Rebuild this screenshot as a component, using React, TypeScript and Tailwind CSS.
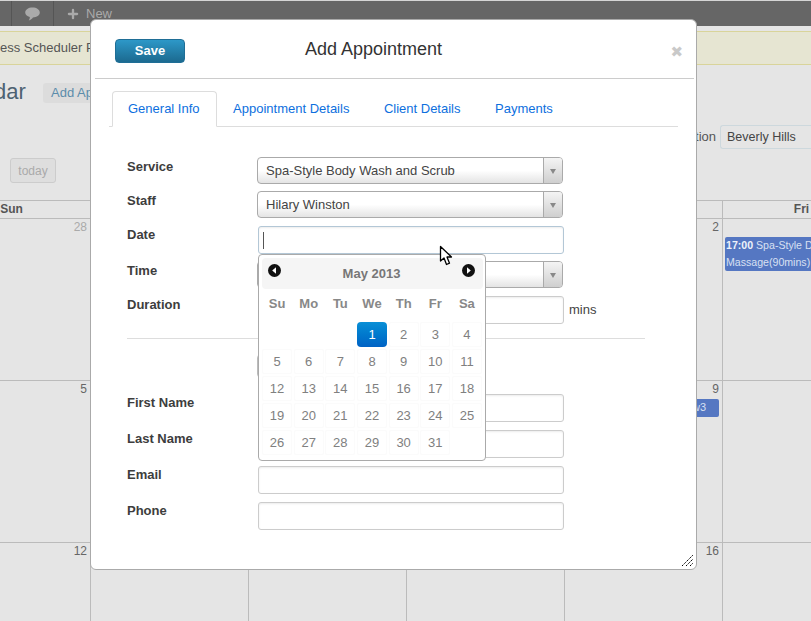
import { Plus } from 'lucide-react'

const weeks = [
  [28, 29, 30, 1, 2, 3, 4],
  [5, 6, 7, 8, 9, 10, 11],
  [12, 13, 14, 15, 16, 17, 18],
]

const pickerDays: (number | null)[] = [
  null, null, null, 1, 2, 3, 4,
  5, 6, 7, 8, 9, 10, 11,
  12, 13, 14, 15, 16, 17, 18,
  19, 20, 21, 22, 23, 24, 25,
  26, 27, 28, 29, 30, 31, null,
]

const Select = ({ value }: { value: string }) => (
  <div className="flex h-[27px] w-[306px] overflow-hidden rounded-[4px] border border-[#aaa] bg-gradient-to-b from-white via-white to-[#e4e4e4]">
    <div className="flex-1 pl-2 text-[13px] leading-[25px] text-[#444]">{value}</div>
    <div className="flex w-[19px] items-center justify-center border-l border-[#aaa] bg-gradient-to-b from-[#f4f4f4] to-[#cfcfcf]">
      <div className="mt-[1px] border-x-[3.5px] border-t-[5px] border-x-transparent border-t-[#888]" />
    </div>
  </div>
)

const Input = ({ focused, caret }: { focused?: boolean; caret?: boolean }) => (
  <div className={`ml-px flex h-[28px] w-[306px] items-center rounded-[3px] border bg-white pl-[4px] shadow-[inset_0_1px_2px_rgba(0,0,0,0.08)] ${focused ? 'border-[#b3c7d6]' : 'border-[#ccc]'}`}>
    {caret && <div className="h-[17px] w-px bg-[#555]" />}
  </div>
)

const Row = ({ label, children, className }: { label: string; children: React.ReactNode; className?: string }) => (
  <div className={`flex ${className ?? ''}`}>
    <div className="w-[130px] text-[13px] font-bold leading-[18px] text-[#3d3d3d]">{label}</div>
    {children}
  </div>
)

const Arrow = ({ dir }: { dir: 'left' | 'right' }) => (
  <svg width="13" height="13" viewBox="0 0 13 13">
    <circle cx="6.5" cy="6.5" r="6.5" fill="#111" />
    {dir === 'left' ? <path d="M8 3.2 L4.2 6.5 L8 9.8 Z" fill="#fff" /> : <path d="M5 3.2 L8.8 6.5 L5 9.8 Z" fill="#fff" />}
  </svg>
)

const DatePicker = () => (
  <div className="absolute left-[167px] top-[234px] h-[207px] w-[228px] rounded-[4px] border border-[#aaa] bg-white pl-[3px] pr-[2px] pt-[3px]">
    <div className="flex h-[31px] items-start justify-between rounded-[4px] bg-[#f5f5f5] pl-[6px] pr-[8px] pt-[6px]">
      <Arrow dir="left" />
      <span className="pt-px text-[13px] font-bold leading-[18px] text-[#777]">May 2013</span>
      <Arrow dir="right" />
    </div>
    <div className="mt-[1px] grid grid-cols-7 gap-x-[1.5px] pr-px">
      {['Su', 'Mo', 'Tu', 'We', 'Th', 'Fr', 'Sa'].map((d) => (
        <div key={d} className="h-[27px] text-center text-[13px] font-bold leading-[27px] text-[#888]">{d}</div>
      ))}
    </div>
    <div className="mt-[5px] grid grid-cols-7 gap-x-[1.5px] gap-y-[2px] pr-px">
      {pickerDays.map((d, i) =>
        d === 1 ? (
          <div key={i} className="h-[25px] rounded-[4px] bg-gradient-to-b from-[#0a8fd6] to-[#0062c4] text-center text-[13px] leading-[25px] text-white">1</div>
        ) : d ? (
          <div key={i} className="h-[25px] rounded-[2px] border border-[#fbfbfb] text-center text-[13px] leading-[23px] text-[#808080]">{d}</div>
        ) : (
          <div key={i} className="h-[25px]" />
        ),
      )}
    </div>
  </div>
)

const Modal = () => (
  <div className="absolute left-[90px] top-[19px] h-[551px] w-[607px] rounded-[6px] border border-[#aaa] bg-white pl-[4px] pr-[2px]">
    <div className="relative flex h-[59px] items-start border-b border-[#ccc]">
      <button className="ml-[20px] mt-[19px] h-[24px] w-[70px] rounded-[4px] border border-[#1f6e96] bg-gradient-to-b from-[#2d98c8] to-[#1c6a90] text-[13px] font-bold text-white">Save</button>
      <h3 className="ml-[120px] mt-[17px] text-[18px] leading-[24px] text-[#333]">Add Appointment</h3>
      <span className="absolute right-[11px] top-[24px] font-['DejaVu_Sans',sans-serif] text-[15px] leading-[16px] text-[#c9c9c9]">✖</span>
    </div>
    <div className="ml-[14px] mr-[16px] mt-[12px] flex h-[36px] items-stretch border-b border-[#ddd] pl-[3px] text-[13px] text-[#0d6fde]">
      <div className="-mb-px rounded-t-[4px] border border-b-white border-[#ddd] bg-white pl-[15px] pr-[16px] leading-[33px]">General Info</div>
      <div className="pl-[16.5px] pr-[17px] leading-[35px]">Appointment Details</div>
      <div className="pl-[17.5px] pr-[17px] leading-[35px]">Client Details</div>
      <div className="pl-[17.5px] leading-[35px]">Payments</div>
    </div>
    <div className="pl-[32px] pt-[30px]">
      <Row label="Service" className="[&>div:first-child]:pt-px"><Select value="Spa-Style Body Wash and Scrub" /></Row>
      <Row label="Staff" className="mt-[7px] [&>div:first-child]:pt-px"><Select value="Hilary Winston" /></Row>
      <Row label="Date" className="mt-[8px]"><Input focused caret /></Row>
      <Row label="Time" className="mt-[7px] [&>div:first-child]:pt-px"><Select value="" /></Row>
      <Row label="Duration" className="mt-[8px]">
        <Input />
        <span className="ml-[5px] text-[13px] leading-[28px] text-[#444]">mins</span>
      </Row>
      <div className="mt-[14px] w-[518px] border-t border-[#ddd]" />
      <div className="ml-[130px] mt-[15px] h-[24px] w-[60px] rounded-[4px] border border-[#bbb] bg-[#eee]" />
      <Row label="First Name" className="mt-[16px]"><Input /></Row>
      <Row label="Last Name" className="mt-[8px]"><Input /></Row>
      <Row label="Email" className="mt-[8px]"><Input /></Row>
      <Row label="Phone" className="mt-[8px]"><Input /></Row>
    </div>
    <DatePicker />
    <svg className="absolute left-[348px] top-[225px]" width="15" height="22" viewBox="0 0 15 22">
      <path d="M1.5 1.5 L1.5 16 L5 13 L7.5 19.5 L10.5 18.2 L8 12 L12.5 12 Z" fill="#fff" stroke="#000" strokeWidth="1.3" strokeLinejoin="round" />
    </svg>
    <svg className="absolute right-[2px] bottom-[2px]" width="13" height="13" viewBox="0 0 13 13" stroke="#000" strokeWidth="1" strokeDasharray="1.5 0.8">
      <path d="M1 12 L12 1 M5 12 L12 5 M9 12 L12 9" />
    </svg>
  </div>
)

export default function App() {
  return (
    <div className="relative h-[621px] w-[811px] overflow-hidden bg-[#e5e5e5] font-['Liberation_Sans',sans-serif]">
      <div className="flex h-[26px] items-center border-t border-[#d5d5d5] bg-[#666] text-[13px] text-[#aaa]">
        <div className="ml-[11px] flex h-full w-[43px] items-center justify-center border-x border-[#555]">
          <svg width="15" height="14" viewBox="0 0 15 14" fill="#aaa">
            <path d="M7.5 0.5 C11.6 0.5 14.8 2.6 14.8 5.6 C14.8 8.4 11.8 10.5 8 10.5 C7 12 5.6 13 3.8 13.4 C4.6 12.4 4.9 11.2 4.8 10.1 C2 9.3 0.2 7.6 0.2 5.6 C0.2 2.6 3.4 0.5 7.5 0.5 Z" />
          </svg>
        </div>
        <Plus size={14} strokeWidth={4} className="ml-[12px] text-[#aaa]" />
        <span className="ml-[6px]">New</span>
      </div>
      <div className="mt-[5px] h-[34px] border-y border-[#d9d49a] bg-[#e6e5d2] text-[13px] leading-[32px] text-[#555]">ess Scheduler Pr</div>
      <div className="mt-[12px] flex h-[30px] items-center">
        <span className="-ml-[6px] w-[49px] text-[22px] leading-[30px] text-[#4d6272]">dar</span>
        <span className="mt-[2px] flex h-[20px] w-[70px] items-center rounded-[3px] bg-[#dcdcdc] pl-[8px] text-[13px] text-[#5b8cab]">Add Ap</span>
      </div>
      <div className="-mr-[2px] mt-[18px] flex h-[24px] items-center justify-end">
        <span className="text-[13px] text-[#555]">tion</span>
        <div className="ml-[4px] h-[24px] w-[93px] rounded-l-[3px] border border-r-0 border-[#cdd8dd] pl-[6px] text-[12.5px] leading-[22px] text-[#444]">Beverly Hills</div>
      </div>
      <button className="ml-[10px] mt-[9px] block h-[25px] w-[46px] rounded-[3px] border border-[#ccc] bg-[#dedede] text-[12px] text-[#aaa]">today</button>
      <div className="-ml-[67px] mt-[17px] w-[1106px] border-t border-[#bbb]">
        <div className="box-content grid h-[17px] grid-cols-[repeat(7,158px)] border-b border-[#bbb] text-center text-[12px] font-bold leading-[16px] text-[#555]">
          {['Sun', 'Mon', 'Tue', 'Wed', 'Thu', 'Fri', 'Sat'].map((d) => (
            <div key={d} className="border-r border-[#bbb]">{d}</div>
          ))}
        </div>
        {weeks.map((week, w) => (
          <div key={w} className="grid h-[162px] grid-cols-[repeat(7,158px)] border-b border-[#bbb]">
            {week.map((day, i) => (
              <div key={i} className="border-r border-[#bbb] pt-[1px]">
                <div className={`pr-[3px] text-right text-[12px] leading-[14px] ${w === 0 && i === 0 ? 'text-[#aaa]' : 'text-[#666]'}`}>{day}</div>
                {w === 0 && i === 5 && (
                  <div className="ml-[2px] mt-[3px] h-[34px] w-[153px] overflow-hidden rounded-[2px] bg-[#5577c2] pl-[1px] text-[10.6px] leading-[17px] text-[#d8e0f2]">
                    <b className="text-[#eef2fa]">17:00</b> Spa-Style Deluxe Massage(90mins) -
                  </div>
                )}
                {w === 1 && i === 4 && (
                  <div className="mt-[3px] h-[18px] w-[154px] rounded-[2px] bg-[#5577c2] pr-[13px] text-right text-[11px] leading-[16px] text-[#d8e0f2]">w3</div>
                )}
              </div>
            ))}
          </div>
        ))}
      </div>
      <Modal />
    </div>
  )
}
